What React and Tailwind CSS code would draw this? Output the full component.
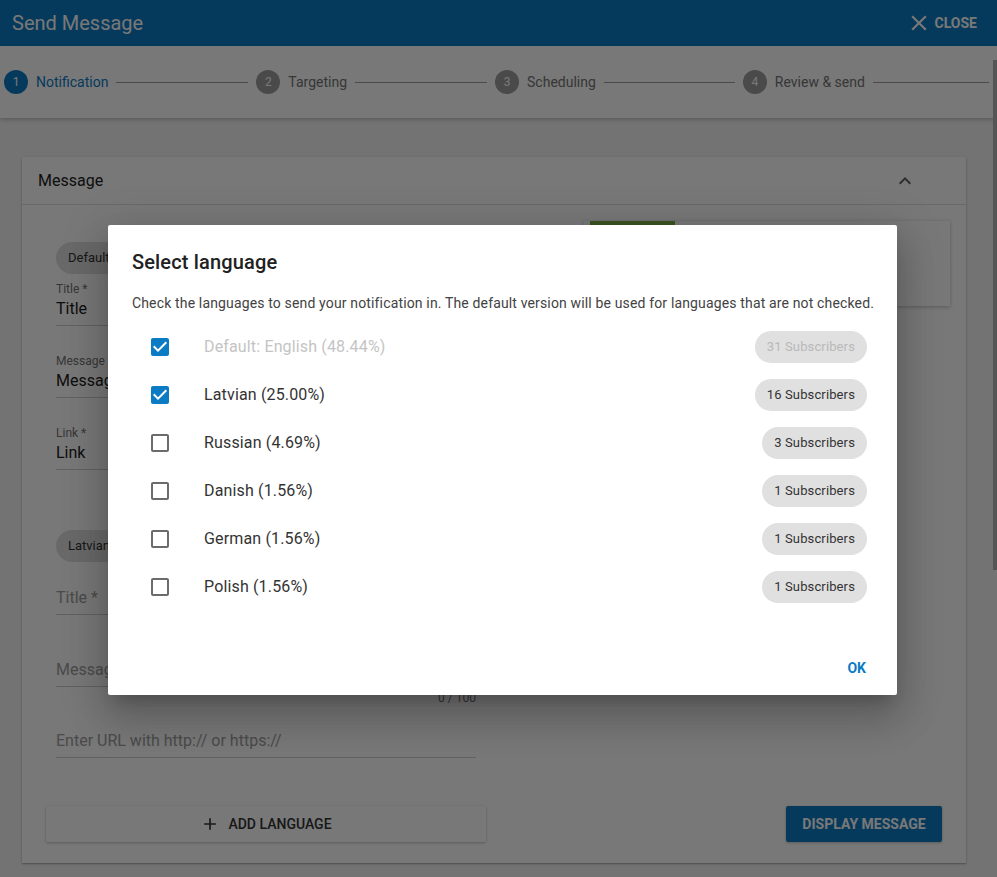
const steps = [
  { n: 1, label: 'Notification', active: true, line: 'w-[132px]' },
  { n: 2, label: 'Targeting', line: 'w-[132px]' },
  { n: 3, label: 'Scheduling', line: 'w-[131px]' },
  { n: 4, label: 'Review & send', line: 'w-[116px]' },
];

const languages = [
  { label: 'Default: English (48.44%)', subs: '31 Subscribers', checked: true, disabled: true },
  { label: 'Latvian (25.00%)', subs: '16 Subscribers', checked: true },
  { label: 'Russian (4.69%)', subs: '3 Subscribers' },
  { label: 'Danish (1.56%)', subs: '1 Subscribers' },
  { label: 'German (1.56%)', subs: '1 Subscribers' },
  { label: 'Polish (1.56%)', subs: '1 Subscribers' },
];

function CheckIcon({ checked }) {
  if (checked) {
    return (
      <svg className="h-6 w-6 shrink-0" viewBox="0 0 24 24" fill="#0b7bc4">
        <path d="M19 3H5c-1.11 0-2 .9-2 2v14c0 1.1.89 2 2 2h14c1.11 0 2-.9 2-2V5c0-1.1-.89-2-2-2zm-9 14l-5-5 1.41-1.41L10 14.17l7.59-7.59L19 8l-9 9z" />
      </svg>
    );
  }
  return (
    <svg className="h-6 w-6 shrink-0" viewBox="0 0 24 24" fill="#6b6b6b">
      <path d="M19 5v14H5V5h14m0-2H5c-1.1 0-2 .9-2 2v14c0 1.1.9 2 2 2h14c1.1 0 2-.9 2-2V5c0-1.1-.9-2-2-2z" />
    </svg>
  );
}

function Chip({ children }) {
  return (
    <div className="inline-flex h-8 items-center rounded-full bg-[#e0e0e0] px-3 text-[13px] text-[#333]">
      {children}
    </div>
  );
}

export default function App() {
  return (
    <div className="relative h-[877px] w-[997px] overflow-hidden bg-[#f5f5f5] font-['Roboto',sans-serif]">
      {/* top bar */}
      <header className="flex h-[46px] items-center justify-between bg-[#0b7bc4] pl-3 pr-5">
        <h1 className="text-[20px] text-white">Send Message</h1>
        <button className="flex items-center text-sm font-bold text-white">
          <svg className="h-[26px] w-[26px]" viewBox="0 0 24 24" fill="currentColor">
            <path d="M19 6.41L17.59 5 12 10.59 6.41 5 5 6.41 10.59 12 5 17.59 6.41 19 12 13.41 17.59 19 19 17.59 13.41 12z" />
          </svg>
          <span className="ml-[3px]">CLOSE</span>
        </button>
      </header>

      {/* stepper */}
      <div className="relative flex h-[72px] items-center bg-white pl-1 shadow-[0_2px_4px_rgba(0,0,0,0.2)]">
        {steps.map((s) => (
          <div key={s.n} className="flex shrink-0 items-center">
            <div
              className={`flex h-6 w-6 items-center justify-center rounded-full text-xs text-white ${
                s.active ? 'bg-[#0b7bc4]' : 'bg-[#9e9e9e]'
              }`}
            >
              {s.n}
            </div>
            <span className={`ml-2 text-sm ${s.active ? 'text-[#0b7bc4]' : 'text-[#757575]'}`}>{s.label}</span>
            <div className={`mx-2 h-px bg-[#9e9e9e] ${s.line}`} />
          </div>
        ))}
      </div>

      {/* content */}
      <main className="pl-[22px] pr-[31px] pt-[39px]">
        <section className="bg-white shadow-[0_1px_3px_rgba(0,0,0,0.2),0_1px_1px_rgba(0,0,0,0.14)]">
          <div className="flex h-12 items-center justify-between border-b border-[#e0e0e0] pl-4 pr-[49px]">
            <span className="pt-px text-base text-[#212121]">Message</span>
            <svg className="h-6 w-6" viewBox="0 0 24 24" fill="#616161">
              <path d="M7.41 15.41L12 10.83l4.59 4.58L18 14l-6-6-6 6z" />
            </svg>
          </div>

          <div className="px-6 pb-[21px] pt-4">
            <div className="flex">
              <div className="w-[440px] px-2.5 pt-[21px]">
                <Chip>Default: English</Chip>

                <div className="mt-[7px] border-b border-[#cfcfcf] pb-1">
                  <div className="text-xs leading-4 text-[#757575]">Title *</div>
                  <div className="text-base leading-6 text-[#212121]">Title</div>
                </div>
                <div className="mt-[27px] border-b border-[#cfcfcf] pb-1">
                  <div className="text-xs leading-4 text-[#757575]">Message *</div>
                  <div className="text-base leading-6 text-[#212121]">Message</div>
                </div>
                <div className="mt-[27px] border-b border-[#cfcfcf] pb-1">
                  <div className="text-xs leading-4 text-[#757575]">Link *</div>
                  <div className="text-base leading-6 text-[#212121]">Link</div>
                </div>

                <div className="mt-[60px]">
                  <Chip>Latvian (25.00%)</Chip>
                </div>

                <div className="mt-2 border-b border-[#cfcfcf] pb-1 pt-4">
                  <div className="text-base leading-6 text-[#9e9e9e]">Title *</div>
                </div>
                <div className="mt-[27px] border-b border-[#cfcfcf] pb-1 pt-4">
                  <div className="text-base leading-6 text-[#9e9e9e]">Message</div>
                </div>
                <div className="mt-[3px] text-right text-xs leading-4 text-[#757575]">0 / 100</div>
                <div className="mt-[7px] border-b border-[#cfcfcf] pb-1 pt-4">
                  <div className="text-base leading-6 text-[#9e9e9e]">Enter URL with http:// or https://</div>
                </div>
              </div>

              <div className="flex-1">
                <div className="-mr-2 ml-auto h-[85px] w-[366px] bg-white shadow-[0_1px_4px_rgba(0,0,0,0.25)]">
                  <div className="ml-1.5 h-1 w-[85px] bg-[#7cb342]" />
                </div>
              </div>
            </div>

            <div className="mt-12 flex items-center justify-between">
              <button className="flex h-9 w-[440px] items-center justify-center gap-2 rounded-[2px] bg-white text-sm font-medium text-[#333] shadow-[0_1px_3px_rgba(0,0,0,0.25)]">
                <svg className="h-5 w-5" viewBox="0 0 24 24" fill="#333">
                  <path d="M19 13h-6v6h-2v-6H5v-2h6V5h2v6h6v2z" />
                </svg>
                ADD LANGUAGE
              </button>
              <button className="h-9 w-[156px] rounded-[2px] bg-[#0b7bc4] text-sm font-bold text-white shadow-[0_1px_3px_rgba(0,0,0,0.25)]">
                DISPLAY MESSAGE
              </button>
            </div>
          </div>
        </section>
      </main>

      {/* scrollbar thumb */}
      <div className="absolute right-0 top-[60px] h-[510px] w-[4px] bg-[#b4b4b4]" />

      {/* backdrop */}
      <div className="absolute inset-0 bg-black/[0.53]" />

      {/* dialog */}
      <div className="absolute left-[108px] top-[225px] h-[470px] w-[789px] rounded-[2px] bg-white shadow-[0_11px_15px_-7px_rgba(0,0,0,0.2),0_24px_38px_3px_rgba(0,0,0,0.14),0_9px_46px_8px_rgba(0,0,0,0.12)]">
        <h2 className="px-6 pt-[21px] text-[20px] font-medium leading-8 tracking-[0.0075em] text-[#212121]">
          Select language
        </h2>
        <p className="mt-[15px] whitespace-nowrap px-6 text-sm leading-5 tracking-[0.0107em] text-[#424242]">
          Check the languages to send your notification in. The default version will be used for languages that are not checked.
        </p>
        <ul className="mt-[10px] pl-10 pr-[30px]">
          {languages.map((l) => (
            <li key={l.label} className="flex h-12 items-center">
              <CheckIcon checked={l.checked} />
              <span
                className={`ml-8 flex-1 text-base tracking-[0.0094em] ${l.disabled ? 'text-[#c4c4c4]' : 'text-[#333]'}`}
              >
                {l.label}
              </span>
              <div
                className={`inline-flex h-8 items-center rounded-full bg-[#e0e0e0] px-3 text-[13px] tracking-[0.01em] ${
                  l.disabled ? 'text-[#b8b8b8]' : 'text-[#333]'
                }`}
              >
                {l.subs}
              </div>
            </li>
          ))}
        </ul>
        <div className="mt-[39px] flex justify-end pr-[31px]">
          <button className="h-9 text-sm font-bold text-[#0b7bc4]">OK</button>
        </div>
      </div>
    </div>
  );
}
